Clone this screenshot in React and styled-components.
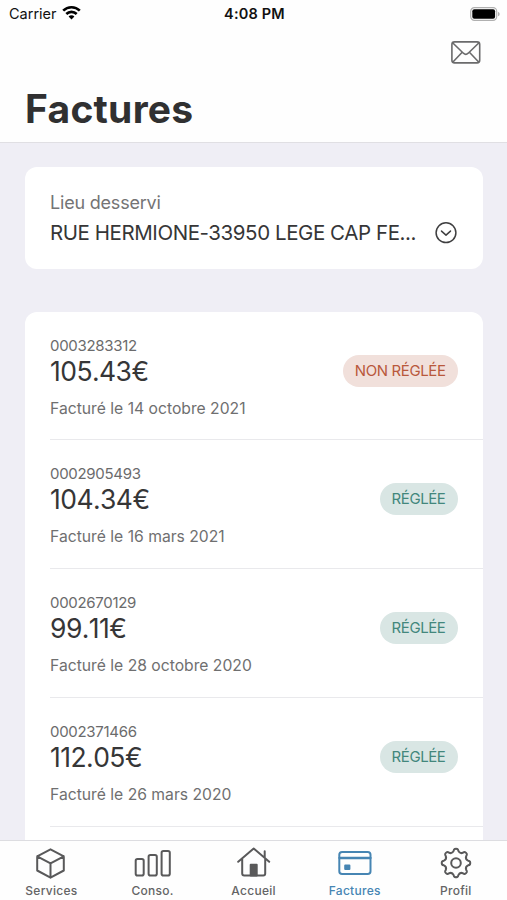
import React from 'react'
import styled, { createGlobalStyle } from 'styled-components'

const GlobalStyle = createGlobalStyle`
* {
    box-sizing: border-box;
}
body {
    margin: 0;
    background: #efeef5;
    font-family: Inter, 'Liberation Sans', sans-serif;
    color: #363637;
}
`
const Screen = styled.div`
height: 100vh;
display: flex;
flex-direction: column;
overflow: hidden;
`
const Header = styled.header`
height: 143px;
flex: none;
background: #fefefe;
border-bottom: 1px solid #e0dfe3;
`
const StatusBar = styled.div`
display: grid;
grid-template-columns: 1fr auto 1fr;
align-items: center;
height: 28px;
padding: 0 7px 0 9px;
color: #111;
font-size: 14.5px;
line-height: 28px;
`
const Carrier = styled.div`
display: flex;
align-items: center;
gap: 5px;
svg {
    margin-top: -3px;
}
`
const Clock = styled.span`
font-weight: 600;
letter-spacing: 0.2px;
`
const Battery = styled.div`
display: flex;
justify-content: flex-end;
svg {
    margin-top: -1px;
}
`
const Toolbar = styled.div`
display: flex;
justify-content: flex-end;
padding: 12px 26px 0 0;
height: 56px;
`
const Title = styled.h1`
margin: 0;
padding-left: 25px;
font-size: 39px;
line-height: 50px;
font-weight: 700;
letter-spacing: 0.25px;
color: #303031;
`
const Content = styled.main`
flex: 1;
min-height: 0;
overflow: hidden;
padding: 24px 24.5px 0 25px;
`
const Card = styled.section`
background: #fff;
border-radius: 12px;
`
const PlaceCard = styled(Card)`
height: 102px;
padding: 24px 25px 0;
margin-bottom: 42.5px;
`
const PlaceLabel = styled.div`
font-size: 18px;
line-height: 24px;
letter-spacing: -0.2px;
color: #747475;
`
const PlaceSelect = styled.div`
display: flex;
align-items: center;
justify-content: space-between;
height: 35px;
`
const Address = styled.span`
font-size: 20.5px;
letter-spacing: -0.43px;
white-space: nowrap;
`
const InvoiceRow = styled.article`
height: 128.8px;
margin-left: 25px;
padding-right: 25px;
display: flex;
justify-content: space-between;
border-bottom: 1px solid #e9e9ec;
`
const InvoiceInfo = styled.div`
padding-top: 24px;
`
const Reference = styled.div`
font-size: 15px;
line-height: 19px;
letter-spacing: -0.3px;
color: #6b6b6c;
`
const Amount = styled.div`
font-size: 26.5px;
line-height: 32px;
letter-spacing: -0.55px;
font-kerning: none;
`
const InvoiceDate = styled.div`
margin-top: 11px;
font-size: 15.7px;
line-height: 22px;
color: #6f6f70;
`
const Badge = styled.span`
height: 32px;
margin-top: 43px;
padding: 0 12px;
border-radius: 16px;
font-size: 15px;
line-height: 32px;
letter-spacing: -0.4px;
color: ${({ $paid }) => ($paid ? '#43877c' : '#b9583c')};
background: ${({ $paid }) => ($paid ? '#d9e6e4' : '#f1e0db')};
`
const TabBar = styled.nav`
flex: none;
height: 60px;
display: grid;
grid-template-columns: repeat(5, 101.1px);
padding-left: 0.9px;
background: #fefefe;
border-top: 1px solid #dddde1;
`
const Tab = styled.a`
display: flex;
flex-direction: column;
align-items: center;
padding-top: 3px;
font-size: 12px;
line-height: 18px;
font-weight: 500;
letter-spacing: 0.28px;
color: ${({ $active }) => ($active ? '#4685b3' : '#646465')};
`
const TabIcon = styled.svg.attrs({ viewBox: '0 0 38 38', width: 38, height: 38 })`
fill: none;
stroke: ${({ $active }) => ($active ? '#4685b3' : '#59595a')};
stroke-width: 2;
stroke-linejoin: round;
stroke-linecap: round;
`

const WifiIcon = () => (
    <svg width="19" height="15" viewBox="0 0 19 15" fill="none" stroke="#000" strokeWidth="2.6">
        <path d="M1.2 5.6a11.8 11.8 0 0 1 16.6 0" />
        <path d="M4.3 9a7.4 7.4 0 0 1 10.4 0" />
        <path d="M9.5 14.6 6.6 11.5a4 4 0 0 1 5.8 0z" fill="#000" stroke="none" />
    </svg>
)

const BatteryIcon = () => (
    <svg width="30" height="14" viewBox="0 0 30 14">
        <rect x="0.7" y="0.7" width="26" height="12.6" rx="3.7" fill="#fff" stroke="#b0b0b0" strokeWidth="1.2" />
        <rect x="2.3" y="2.3" width="22.8" height="9.4" rx="2" fill="#000" />
        <path d="M28 4.7v4.6q1.7-.7 1.7-2.3T28 4.7z" fill="#b0b0b0" />
    </svg>
)

const MailIcon = () => (
    <svg width="30" height="24" viewBox="0 0 30 24" fill="none" stroke="#6b6b6c" strokeWidth="1.6" strokeLinejoin="round">
        <rect x="0.9" y="1.9" width="27.8" height="21" rx="2.6" />
        <path d="M1.6 2.7 12.4 13.2q2.4 2.2 4.8 0L28 2.7M1.7 22.2l9.5-9.9M27.9 22.2l-9.5-9.9" />
    </svg>
)

const ChevronIcon = () => (
    <svg width="24" height="24" viewBox="0 0 24 24" fill="none" stroke="#3f3f40" strokeWidth="1.5" strokeLinecap="round" strokeLinejoin="round">
        <circle cx="12" cy="11.7" r="9.9" />
        <path d="m7.5 10.1 4.5 4 4.5-4" />
    </svg>
)

// eight rounded teeth around the hub
const gearPath = () => {
    const at = (r, deg) => {
        const a = (deg * Math.PI) / 180
        return `${(19 + r * Math.sin(a)).toFixed(2)} ${(19 - r * Math.cos(a)).toFixed(2)}`
    }
    let d = `M${at(14.1, -5)}`
    for (let i = 0; i < 8; i++) {
        const c = i * 45
        d += `Q${at(14.5, c)} ${at(14.1, c + 5)}`
        d += `Q${at(13.8, c + 9)} ${at(12.3, c + 11)}`
        d += `Q${at(9.8, c + 22.5)} ${at(12.3, c + 34)}`
        d += `Q${at(13.8, c + 36)} ${at(14.1, c + 40)}`
    }
    return d + 'Z'
}

const tabs = [
    {
        label: 'Services',
        icon: <path d="M18.5 5.3 31.8 12.3v14.2L18.5 33.7 5.2 26.5V12.3zM5.2 12.3 18.5 19.3l13.3-7M18.5 19.3v14.4" />,
    },
    {
        label: 'Conso.',
        icon: (
            <>
                <rect x="1.7" y="15" width="8" height="16.5" rx="1.8" />
                <rect x="14.6" y="11" width="8.2" height="20.5" rx="1.8" />
                <rect x="27.6" y="7" width="8.2" height="24.5" rx="1.8" />
            </>
        ),
    },
    {
        label: 'Accueil',
        icon: (
            <>
                <path d="M3.2 17.8 18.7 4.5 34.2 17.8M7.2 14.8v14.7q0 2 2 2h19q2 0 2-2V14.8M29.7 13.5V7.3" />
                <path d="M15.7 20.8h6v10.7h-6z" fill="#59595a" />
            </>
        ),
    },
    {
        label: 'Factures',
        active: true,
        icon: (
            <>
                <rect x="3.3" y="8" width="31.2" height="22" rx="2.8" />
                <path d="M3.5 14h31" strokeWidth="2.3" />
                <path d="M9.2 21.6h4.2v3.4H9.2z" fill="#4685b3" />
            </>
        ),
    },
    {
        label: 'Profil',
        icon: (
            <>
                <path d={gearPath()} />
                <circle cx="19" cy="19" r="4.8" />
            </>
        ),
    },
]

const invoices = [
    { id: '0003283312', amount: '105.43€', date: '14 octobre 2021', paid: false },
    { id: '0002905493', amount: '104.34€', date: '16 mars 2021', paid: true },
    { id: '0002670129', amount: '99.11€', date: '28 octobre 2020', paid: true },
    { id: '0002371466', amount: '112.05€', date: '26 mars 2020', paid: true },
]

const Invoice = ({ id, amount, date, paid }) => (
    <InvoiceRow>
        <InvoiceInfo>
            <Reference>{id}</Reference>
            <Amount>{amount}</Amount>
            <InvoiceDate>Facturé le {date}</InvoiceDate>
        </InvoiceInfo>
        <Badge $paid={paid}>{paid ? 'RÉGLÉE' : 'NON RÉGLÉE'}</Badge>
    </InvoiceRow>
)

const App = () => {
    return (
        <Screen>
            <GlobalStyle />
            <Header>
                <StatusBar>
                    <Carrier>
                        Carrier <WifiIcon />
                    </Carrier>
                    <Clock>4:08 PM</Clock>
                    <Battery>
                        <BatteryIcon />
                    </Battery>
                </StatusBar>
                <Toolbar>
                    <MailIcon />
                </Toolbar>
                <Title>Factures</Title>
            </Header>
            <Content>
                <PlaceCard>
                    <PlaceLabel>Lieu desservi</PlaceLabel>
                    <PlaceSelect>
                        <Address>RUE HERMIONE-33950 LEGE CAP FE...</Address>
                        <ChevronIcon />
                    </PlaceSelect>
                </PlaceCard>
                <Card>
                    {invoices.map((invoice) => (
                        <Invoice key={invoice.id} {...invoice} />
                    ))}
                    <InvoiceRow />
                </Card>
            </Content>
            <TabBar>
                {tabs.map(({ label, icon, active }) => (
                    <Tab key={label} $active={active}>
                        <TabIcon $active={active}>{icon}</TabIcon>
                        {label}
                    </Tab>
                ))}
            </TabBar>
        </Screen>
    )
}

export default App
